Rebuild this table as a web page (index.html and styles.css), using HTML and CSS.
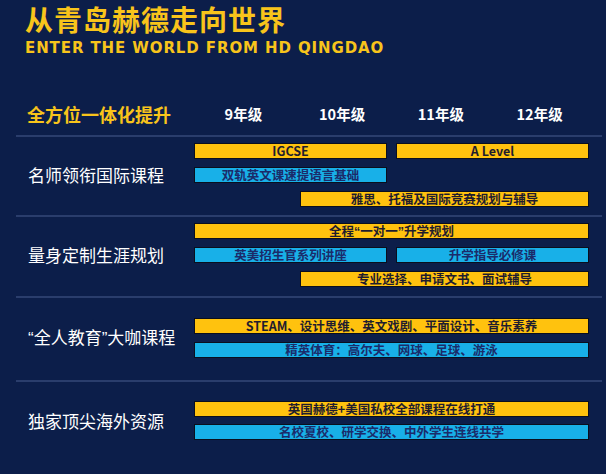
FILE: index.html
```html
<!DOCTYPE html>
<html lang="zh">
<head>
<meta charset="utf-8">
<title>从青岛赫德走向世界</title>
<link rel="stylesheet" href="styles.css">
</head>
<body>
<div class="page">
  <header class="head">
    <h1 class="title">从青岛赫德走向世界</h1>
    <div class="subtitle">ENTER THE WORLD FROM HD QINGDAO</div>
  </header>

  <div class="table">
    <div class="row header-row">
      <div class="label head-label">全方位一体化提升</div>
      <div class="grades">
        <span>9年级</span><span>10年级</span><span>11年级</span><span>12年级</span>
      </div>
    </div>

    <div class="row sec sec1">
      <div class="label">名师领衔国际课程</div>
      <div class="bars">
        <div class="line">
          <div class="bar yellow half">IGCSE</div>
          <div class="bar yellow half">A Level</div>
        </div>
        <div class="line">
          <div class="bar blue half">双轨英文课速提语言基础</div>
        </div>
        <div class="line">
          <div class="bar yellow from10">雅思、托福及国际竞赛规划与辅导</div>
        </div>
      </div>
    </div>

    <div class="row sec sec2">
      <div class="label">量身定制生涯规划</div>
      <div class="bars">
        <div class="line">
          <div class="bar yellow full">全程<span class="q">“</span>一对一<span class="q">”</span>升学规划</div>
        </div>
        <div class="line">
          <div class="bar blue half">英美招生官系列讲座</div>
          <div class="bar blue half">升学指导必修课</div>
        </div>
        <div class="line">
          <div class="bar yellow from10">专业选择、申请文书、面试辅导</div>
        </div>
      </div>
    </div>

    <div class="row sec sec3">
      <div class="label"><span class="q">“</span>全人教育<span class="q">”</span>大咖课程</div>
      <div class="bars">
        <div class="line">
          <div class="bar yellow full">STEAM、设计思维、英文戏剧、平面设计、音乐素养</div>
        </div>
        <div class="line">
          <div class="bar blue full">精英体育：高尔夫、网球、足球、游泳</div>
        </div>
      </div>
    </div>

    <div class="row sec sec4">
      <div class="label">独家顶尖海外资源</div>
      <div class="bars">
        <div class="line">
          <div class="bar yellow full">英国赫德+美国私校全部课程在线打通</div>
        </div>
        <div class="line">
          <div class="bar blue full">名校夏校、研学交换、中外学生连线共学</div>
        </div>
      </div>
    </div>
  </div>
</div>
</body>
</html>
```

FILE: styles.css
```css
* { box-sizing: border-box; }
html, body {
  margin: 0;
  padding: 0;
}
body {
  width: 606px;
  height: 474px;
  overflow: hidden;
  background: #0c1e4a;
  font-family: "Noto Sans CJK SC", "Noto Sans", sans-serif;
  color: #ffffff;
}
.head {
  padding: 2px 0 0 25px;
}
.title {
  margin: 0;
  font-size: 28px;
  line-height: 34px;
  font-weight: 700;
  color: #f8c41b;
  letter-spacing: 1px;
}
.subtitle {
  margin-top: 3px;
  font-family: "DejaVu Sans", sans-serif;
  font-weight: 700;
  font-size: 15px;
  line-height: 18px;
  color: #f8c41b;
  letter-spacing: 0.9px;
}
.q {
  font-family: "Liberation Sans", sans-serif;
}
.table {
  margin: 0 4px 0 16px;
}
.row {
  display: flex;
  align-items: center;
  border-bottom: 2px solid #2a3d6c;
}
.row.sec4 { border-bottom: none; }
.label {
  width: 178px;
  flex: none;
  padding-left: 12px;
  font-size: 17px;
  line-height: 22px;
  color: #ffffff;
  white-space: nowrap;
}
.header-row {
  height: 45px;
  margin-top: 35px;
}
.head-label {
  color: #f8c41b;
  font-weight: 700;
  font-size: 18px;
  padding-left: 11px;
}
.grades {
  width: 395px;
  display: grid;
  grid-template-columns: repeat(4, 1fr);
  text-align: center;
  font-weight: 700;
  font-size: 14.5px;
}
.bars {
  width: 395px;
  display: flex;
  flex-direction: column;
  gap: 8px;
}
.line {
  display: flex;
  justify-content: space-between;
  height: 16px;
}
.bar {
  height: 16px;
  font-size: 12.5px;
  line-height: 14px;
  font-weight: 700;
  text-align: center;
  border: 1px solid #0a0f1e;
  white-space: nowrap;
}
.yellow { background: #ffc20e; color: #1f1d2e; }
.blue { background: #18b0e8; color: #1b2b6a; }
.full { width: 100%; }
.half { width: 193px; }
.from10 { width: 289px; margin-left: auto; }

.sec1 { padding: 6px 0 8px; }
.sec2 { padding: 6px 0 9px; }
.sec3 { padding: 20px 0 22px; }
.sec4 { padding: 19px 0 30px; }
.sec4 .bars { gap: 7px; }
```
